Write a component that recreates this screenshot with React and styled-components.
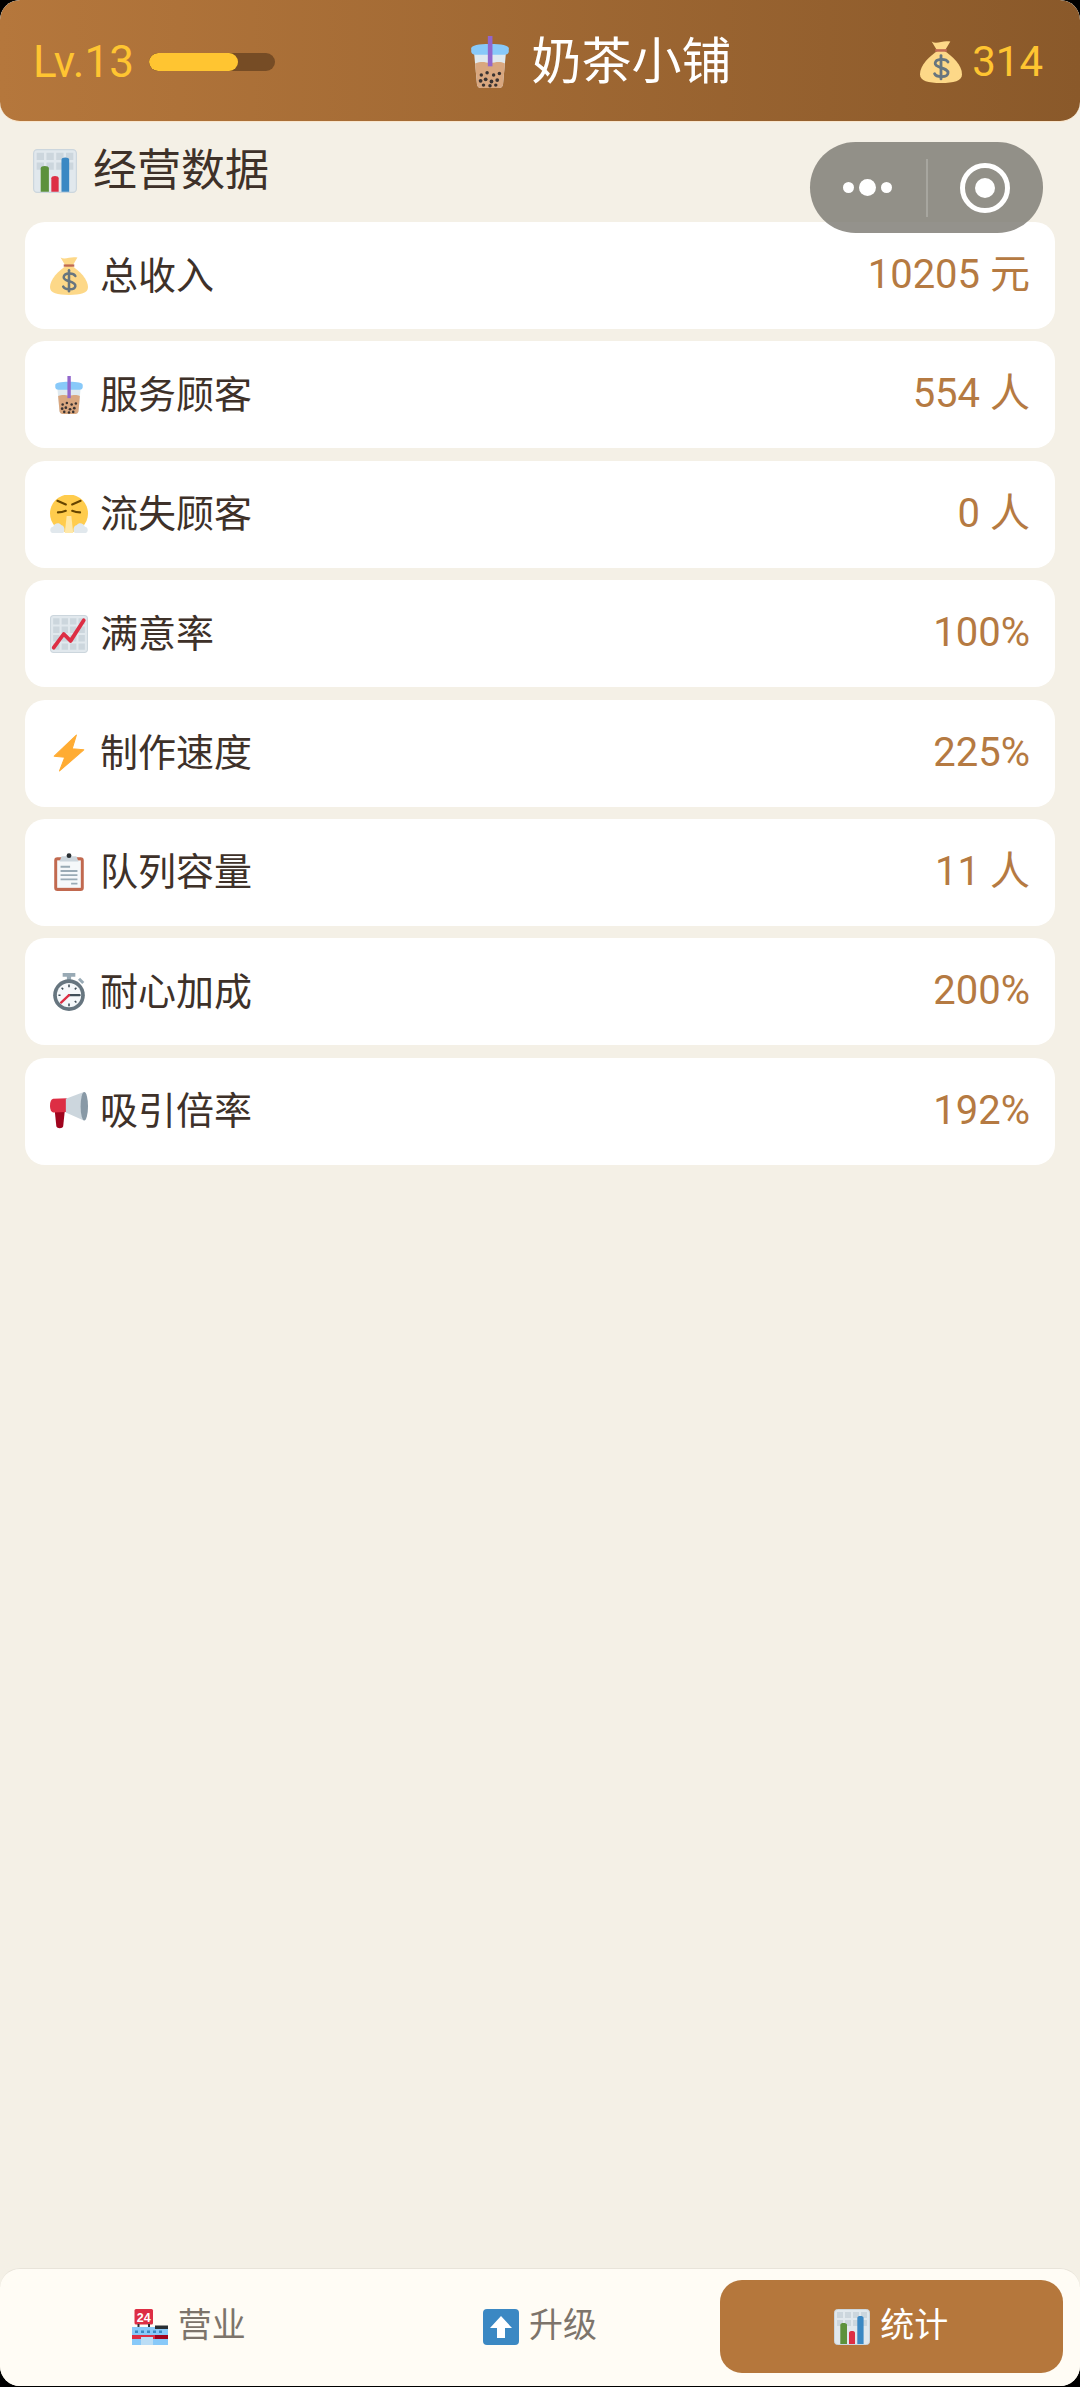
import React from "react";
import styled, { createGlobalStyle } from "styled-components";

const GlobalStyle = createGlobalStyle`
  html, body {
    margin: 0;
    background: #000;
  }
  * {
    box-sizing: border-box;
  }
`;

const Screen = styled.div`
  width: 1080px;
  height: 2386px;
  display: flex;
  flex-direction: column;
  position: relative;
  overflow: hidden;
  border-radius: 20px;
  background: #f4f0e6;
  color: #3e3129;
  font-family: Roboto, "Noto Sans CJK SC", sans-serif;
`;

const Header = styled.header`
  height: 122px;
  flex: none;
  display: flex;
  align-items: center;
  justify-content: space-between;
  padding: 2px 37px 0 33px;
  background: linear-gradient(90deg, #b5773c 0%, #8a592a 100%);
  border-radius: 20px;
  border-bottom: 1px solid #f9e6cd;
`;

const LevelBox = styled.div`
  display: flex;
  align-items: center;
  gap: 15px;
  color: #ffc531;
  font-size: 44px;
  line-height: 48px;
`;

const LevelBar = styled.div`
  width: 126px;
  height: 18px;
  border-radius: 9px;
  background: #764c25;
  overflow: hidden;
`;

const LevelFill = styled.div`
  height: 100%;
  border-radius: 9px;
  background: #ffc531;
`;

const ShopName = styled.div`
  display: flex;
  align-items: center;
  gap: 16px;
  color: #fff;
  font-size: 50px;
  line-height: 60px;
`;

const Coins = styled.div`
  display: flex;
  align-items: center;
  gap: 10px;
  color: #ffc531;
  font-size: 42px;
  line-height: 48px;
`;

const Capsule = styled.div`
  position: absolute;
  top: 142px;
  left: 810px;
  width: 233px;
  height: 91px;
  display: flex;
  align-items: center;
  border-radius: 46px;
  background: rgba(125, 122, 115, 0.82);
`;

const CapsuleSide = styled.div`
  flex: 1;
  display: flex;
  align-items: center;
  justify-content: center;
  gap: 5px;
`;

const CapsuleLine = styled.div`
  width: 2px;
  height: 58px;
  background: rgba(255, 255, 255, 0.2);
`;

const Dot = styled.span`
  width: ${(p) => p.$size}px;
  height: ${(p) => p.$size}px;
  border-radius: 50%;
  background: #fff;
`;

const Ring = styled.div`
  width: 50px;
  height: 50px;
  display: flex;
  align-items: center;
  justify-content: center;
  border: 5px solid #fff;
  border-radius: 50%;
`;

const RingCore = styled.div`
  width: 20px;
  height: 20px;
  border-radius: 50%;
  background: #fff;
`;

const Main = styled.main`
  flex: 1;
  padding: 0 25px;
`;

const SectionTitle = styled.h2`
  height: 100px;
  display: flex;
  align-items: flex-start;
  gap: 16px;
  margin: 0;
  padding: 19px 8px 0;
  font-size: 44px;
  font-weight: 400;
  line-height: 60px;
  color: #3e3129;
`;

const TitleIcon = styled.div`
  height: 60px;
  display: flex;
  align-items: center;
`;

const StatList = styled.div`
  display: flex;
  flex-direction: column;
  gap: 12.4px;
`;

const StatRow = styled.div`
  height: 107px;
  display: flex;
  align-items: center;
  justify-content: space-between;
  padding: 0 25px;
  border-radius: 20px;
  background: #fff;
  font-size: 38px;
  line-height: 50px;
`;

const StatLabel = styled.div`
  display: flex;
  align-items: center;
  gap: 12px;
`;

const StatValue = styled.div`
  margin-bottom: 1px;
  color: #b57a42;
  font-size: 40px;
`;

const TabBar = styled.nav`
  flex: none;
  height: 118px;
  display: flex;
  gap: 8px;
  padding: 11px 17px 13px;
  background: #fffcf5;
  border-radius: 20px 20px 0 0;
  border-top: 1px solid #e8e4da;
`;

const Tab = styled.div`
  flex: 1;
  display: flex;
  align-items: center;
  justify-content: center;
  gap: 10px;
  border-radius: 22px;
  font-size: 34px;
  line-height: 46px;
  color: ${(p) => (p.$active ? "#fff" : "#7d746b")};
  background: ${(p) => (p.$active ? "#b5773c" : "transparent")};
`;

const TabText = styled.span`
  margin-bottom: 4px;
`;

const Glyph = styled.svg`
  flex: none;
  display: block;
`;

const icons = {
  bag: (
    <>
      <path d="M16 8C8 13 0 21 0 28.500 0 34.500 7 36 18 36s18-1.500 18-7.500C36 21 28 13 20 8z" fill="#fdd888" />
      <path d="M10 .5c2.500 1.500 5 1 8 .3s5.500-.6 8-.3l-4.500 7.500h-7z" fill="#fdd888" />
      <path d="M13 7h10v2.200H13z" fill="#bf6952" />
      <g fill="none" stroke="#67757f" strokeWidth="2.400" strokeLinecap="round">
        <path d="M24 18c-1.500-3-10.500-3.500-11 1-.5 4.600 11.500 3.400 11 8.500-.4 4-10 4-11.500.5" />
        <path d="M18 12.500v20" />
      </g>
    </>
  ),
  boba: (
    <>
      <path d="M7 12h22l-2 21.500c-.2 1.600-1.500 2.500-3 2.500H12c-1.500 0-2.800-.9-3-2.500z" fill="#dfe9ef" />
      <path d="M7.700 19c5-2 7-.5 10.500-.5s6-1.500 10.100.5L27 33.500c-.2 1.600-1.500 2.500-3 2.500H12c-1.500 0-2.800-.9-3-2.500z" fill="#d9a77f" />
      <g fill="#3a3332">
        <circle cx="12" cy="27" r="1.200" />
        <circle cx="16" cy="25.500" r="1.200" />
        <circle cx="20.500" cy="27" r="1.200" />
        <circle cx="24.500" cy="26" r="1.200" />
        <circle cx="11.500" cy="31" r="1.300" />
        <circle cx="15" cy="30" r="1.300" />
        <circle cx="19" cy="31.500" r="1.300" />
        <circle cx="23" cy="30.500" r="1.300" />
        <circle cx="13.500" cy="34" r="1.200" />
        <circle cx="18" cy="34.500" r="1.200" />
        <circle cx="22" cy="34" r="1.200" />
      </g>
      <path d="M5 8.500C5 6.500 10 5.500 18 5.500s13 1 13 3v2c0 1.500-1 2.500-3 2.500H8c-2 0-3-1-3-2.500z" fill="#88c9f9" />
      <path d="M16.500 0h3.200v21h-3.200z" fill="#9266cc" />
    </>
  ),
  huff: (
    <>
      <circle cx="18" cy="17.500" r="18" fill="#ffcc4d" />
      <g fill="none" stroke="#664500" strokeWidth="2" strokeLinecap="round">
        <path d="M7 5.500l8 3.500M29 5.500L21 9" />
        <path d="M7.500 16.500c2.500 0 5-.5 7.500-1.500M28.500 16.500c-2.500 0-5-.5-7.500-1.500" />
      </g>
      <path d="M15.800 20h4.400l1.800 16h-8z" fill="#ffe8a8" />
      <path d="M2 36c-2.800-1.500-2-6 1-6 .8-3.500 6-4.500 7.500-1.500 3 .2 4.500 5.500 2 7.500zM34 36c2.800-1.500 2-6-1-6-.8-3.500-6-4.500-7.500-1.500-3 .2-4.500 5.500-2 7.500z" fill="#e1e8ed" />
    </>
  ),
  trend: (
    <>
      <rect x=".5" y=".5" width="35" height="35" rx="3" fill="#e1e8ed" stroke="#ccd6dd" />
      <path d="M3 3h6v6H3zM11 3h6v6h-6zM19 3h6v6h-6zM27 3h6v6h-6zM3 11h6v6H3zM11 11h6v6h-6zM19 11h6v6h-6zM27 11h6v6h-6zM3 19h6v6H3zM11 19h6v6h-6zM19 19h6v6h-6zM27 19h6v6h-6zM3 27h6v6H3zM11 27h6v6h-6zM19 27h6v6h-6zM27 27h6v6h-6z" fill="#ccd6dd" />
      <path d="M3.500 31L13 18l6.500 6.500L32 5" fill="none" stroke="#dd2e44" strokeWidth="3.600" strokeLinecap="round" strokeLinejoin="round" />
    </>
  ),
  bolt: <path d="M25 1L4 21l10 1-5 13 23-20-11-1z" fill="#ffac33" stroke="#ffac33" strokeLinejoin="round" />,
  clip: (
    <>
      <rect x="4" y="4" width="28" height="32" rx="3" fill="#c1694f" />
      <rect x="6.800" y="7" width="22.400" height="26" fill="#f5f8fa" />
      <path d="M11 3h14l2 5H9z" fill="#ccd6dd" />
      <circle cx="18" cy="2.500" r="2.300" fill="#292f33" />
      <path d="M10 13h9M10 17h16M10 21h16M10 25h16M20 29h6" stroke="#99aab5" strokeWidth="1.800" />
    </>
  ),
  watch: (
    <>
      <path d="M12 0h12v3.500h-4V7h-4V3.500h-4z" fill="#99aab5" />
      <path d="M28.500 4.500l4 4-2 2-4-4z" fill="#99aab5" />
      <circle cx="18" cy="21" r="15" fill="#66757f" />
      <circle cx="18" cy="21" r="11.500" fill="#f5f8fa" />
      <path d="M18 21h10" stroke="#414f59" strokeWidth="2.200" strokeLinecap="round" />
      <path d="M18 21l-7.500 7" stroke="#dd2e44" strokeWidth="2.200" strokeLinecap="round" />
      <path d="M18 11v2.500M18 29v2.500M8 21h2M11 14l1.500 1.500M25 14l-1.500 1.500M25 28l-1.500-1.500" stroke="#414f59" strokeWidth="1.500" />
    </>
  ),
  horn: (
    <>
      <path d="M4.500 18H14l-1.500 14.500c-.4 2.500-6 2.500-6.500 0z" fill="#a0041e" />
      <path d="M3 6.500C1 7 0 9.500 0 13s1 6 3 6.500L16 19V6z" fill="#dd2e44" />
      <path d="M15 6.500L32 0v27L15 19.500z" fill="#ccd6dd" />
      <ellipse cx="32.500" cy="13.500" rx="3.500" ry="13.500" fill="#8899a6" />
    </>
  ),
  bars: (
    <>
      <rect x=".5" y=".5" width="35" height="35" rx="3" fill="#e1e8ed" stroke="#ccd6dd" />
      <path d="M3 3h6v6H3zM11 3h6v6h-6zM19 3h6v6h-6zM27 3h6v6h-6zM3 11h6v6H3zM11 11h6v6h-6zM19 11h6v6h-6zM27 11h6v6h-6z" fill="#ccd6dd" />
      <path d="M6.300 16c0-1.400 1.500-2 3.300-2s3.400.6 3.400 2v19H6.300z" fill="#5c913b" />
      <path d="M15 24c0-1.400 1.400-2 3-2s3 .6 3 2v11h-6z" fill="#dd2e44" />
      <path d="M23.300 9c0-1.400 1.400-2 3.100-2s3.200.6 3.200 2v26h-6.300z" fill="#3b88c3" />
    </>
  ),
  store: (
    <>
      <rect x="2.500" y="0" width="18.500" height="15.500" rx="1.500" fill="#dd2e44" />
      <text x="11.700" y="12.700" textAnchor="middle" fontSize="12.500" fontWeight="700" fill="#fff" fontFamily="Liberation Sans, sans-serif">24</text>
      <path d="M5.500 15h2v4h-2zM16 15h2v4h-2z" fill="#292f33" />
      <rect x="0" y="18" width="36" height="18" fill="#88c9f9" />
      <rect x="23" y="16.500" width="13" height="3.500" fill="#292f33" />
      <rect x="0" y="26" width="36" height="4" fill="#dd2e44" />
      <rect x="23" y="26" width="13" height="4" fill="#a0041e" />
      <rect x="9" y="28" width="12" height="8" fill="#bbddf5" />
      <path d="M3 21.500h3v2.500H3zM9 21.500h3v2.500H9zM15 21.500h3v2.500h-3zM21 21.500h3v2.500h-3zM27 21.500h3v2.500h-3z" fill="#3b88c3" />
    </>
  ),
  up: (
    <>
      <rect x="0" y="0" width="36" height="36" rx="4" fill="#3b88c3" />
      <path d="M18 7l11 12h-7v10h-8V19H7z" fill="#fff" />
    </>
  ),
};

const views = { boba: "4 0 28 36" };

const Emoji = ({ name, size = 38 }) => (
  <Glyph width={size} height={size} viewBox={views[name] || "0 0 36 36"} aria-hidden="true">
    {icons[name]}
  </Glyph>
);

const stats = [
  { icon: "bag", label: "总收入", value: "10205 元" },
  { icon: "boba", label: "服务顾客", value: "554 人" },
  { icon: "huff", label: "流失顾客", value: "0 人" },
  { icon: "trend", label: "满意率", value: "100%" },
  { icon: "bolt", label: "制作速度", value: "225%" },
  { icon: "clip", label: "队列容量", value: "11 人" },
  { icon: "watch", label: "耐心加成", value: "200%" },
  { icon: "horn", label: "吸引倍率", value: "192%" },
];

const tabs = [
  { icon: "store", label: "营业" },
  { icon: "up", label: "升级" },
  { icon: "bars", label: "统计", active: true },
];

export default function App() {
  const progress = 71;

  return (
    <Screen>
      <GlobalStyle />
      <Header>
        <LevelBox>
          <span>Lv.13</span>
          <LevelBar>
            <LevelFill style={{ width: `${progress}%` }} />
          </LevelBar>
        </LevelBox>
        <ShopName>
          <Emoji name="boba" size={52} />
          <span>奶茶小铺</span>
        </ShopName>
        <Coins>
          <Emoji name="bag" size={42} />
          <span>314</span>
        </Coins>
      </Header>

      <Capsule>
        <CapsuleSide>
          <Dot $size={11} />
          <Dot $size={17} />
          <Dot $size={11} />
        </CapsuleSide>
        <CapsuleLine />
        <CapsuleSide>
          <Ring>
            <RingCore />
          </Ring>
        </CapsuleSide>
      </Capsule>

      <Main>
        <SectionTitle>
          <TitleIcon>
            <Emoji name="bars" size={44} />
          </TitleIcon>
          <span>经营数据</span>
        </SectionTitle>
        <StatList>
          {stats.map((stat) => (
            <StatRow key={stat.label}>
              <StatLabel>
                <Emoji name={stat.icon} />
                <span>{stat.label}</span>
              </StatLabel>
              <StatValue>{stat.value}</StatValue>
            </StatRow>
          ))}
        </StatList>
      </Main>

      <TabBar>
        {tabs.map((tab) => (
          <Tab key={tab.label} $active={tab.active}>
            <Emoji name={tab.icon} size={36} />
            <TabText>{tab.label}</TabText>
          </Tab>
        ))}
      </TabBar>
    </Screen>
  );
}
